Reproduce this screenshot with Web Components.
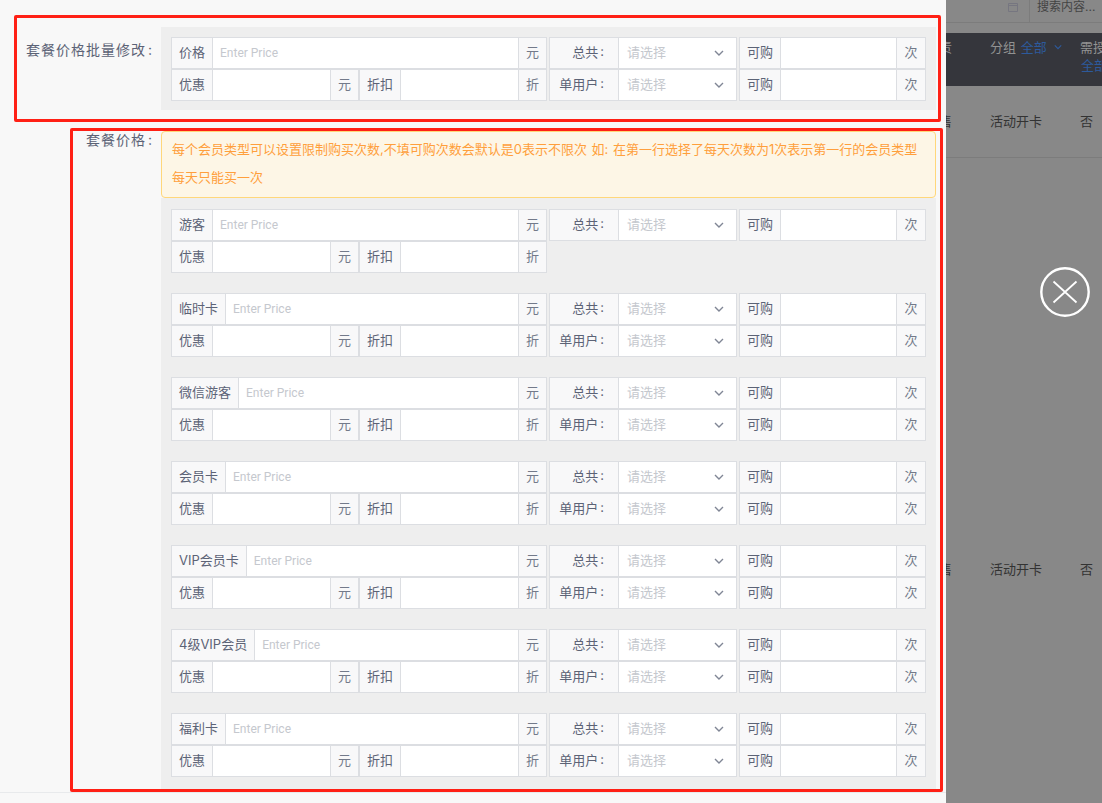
<!DOCTYPE html>
<html lang="zh">
<head>
<meta charset="utf-8">
<title>套餐价格</title>
<style>
  html, body { margin: 0; height: 100%; overflow: hidden; }
  body { font-family: Inter, "Noto Sans CJK SC", sans-serif; }
</style>
</head>
<body>
<app-page></app-page>

<script>
const CHEVRON = `<svg width="10" height="6" viewBox="0 0 10 6" fill="none" stroke="currentColor" stroke-width="1.4"><path d="M1 1l4 4 4-4"/></svg>`;
const COLON = `<span style="margin-left:2px">:</span>`;

// one bordered cell group: [label][input][unit]
class PriceField extends HTMLElement {
  connectedCallback() {
    const root = this.attachShadow({ mode: "open" });
    const placeholder = this.getAttribute("placeholder") || "";
    const unit = this.getAttribute("unit") || "";
    root.innerHTML = `
      <style>
        :host { display: flex; height: 32px; min-width: 0; color: #5c6376; font-size: 13px; }
        .addon, .input { box-sizing: border-box; display: flex; align-items: center; border: 1px solid #dcdee2; white-space: nowrap; }
        .addon { background: #f8f8f9; padding: 0 7px 4px; }
        .addon.label { border-right: 0; }
        .addon.unit { border-left: 0; width: var(--unit-width, 28px); justify-content: center; padding: 0 0 4px; color: #737a8a; }
        .input { flex: 1; min-width: 0; background: #fff; padding: 0 7px; color: #c5c8ce; font: 12px Roboto, Arial, sans-serif; }
      </style>
      <div class="addon label"><slot></slot></div>
      <div class="input">${placeholder}</div>
      <div class="addon unit">${unit}</div>
    `;
  }
}
customElements.define("price-field", PriceField);

// label + fake select with chevron
class SelectField extends HTMLElement {
  connectedCallback() {
    const root = this.attachShadow({ mode: "open" });
    root.innerHTML = `
      <style>
        :host { display: flex; height: 32px; color: #5c6376; font-size: 13px; }
        .label, .select { box-sizing: border-box; display: flex; align-items: center; border: 1px solid #dcdee2; white-space: nowrap; }
        .label { width: 69px; flex: none; justify-content: flex-end; padding: 0 14px 4px 0; background: #f8f8f9; border-right: 0; }
        .select { flex: 1; justify-content: space-between; background: #fff; padding: 0 12px 0 8px; color: #c5c8ce; }
        .select span { padding-bottom: 4px; }
        svg { color: #808695; }
      </style>
      <div class="label"><slot></slot></div>
      <div class="select"><span>请选择</span>${CHEVRON}</div>
    `;
  }
}
customElements.define("select-field", SelectField);

// two rows of fields for one member type
class PriceBlock extends HTMLElement {
  connectedCallback() {
    const root = this.attachShadow({ mode: "open" });
    const name = this.getAttribute("name");
    const short = this.hasAttribute("short");
    root.innerHTML = `
      <style>
        :host { display: grid; grid-template-columns: 188px 188px 190px 189px; height: 64px; }
        .wide { grid-column: 1 / span 2; }
        .third, .fourth { margin-left: 2px; }
        .fourth { --unit-width: 29px; }
      </style>
      <price-field class="wide" placeholder="Enter Price" unit="元">${name}</price-field>
      <select-field class="third">总共${COLON}</select-field>
      <price-field class="fourth" unit="次">可购</price-field>
      <price-field unit="元">优惠</price-field>
      <price-field unit="折">折扣</price-field>
      ${short ? "" : `
      <select-field class="third">单用户${COLON}</select-field>
      <price-field class="fourth" unit="次">可购</price-field>`}
    `;
  }
}
customElements.define("price-block", PriceBlock);

class FormItem extends HTMLElement {
  connectedCallback() {
    const root = this.attachShadow({ mode: "open" });
    root.innerHTML = `
      <style>
        :host { display: grid; grid-template-columns: 161px 775px; }
        .label { box-sizing: border-box; padding: var(--label-top, 0) 8px 0 0; text-align: right; color: #5c6376; font-size: 14px; letter-spacing: 1px; line-height: 18px; white-space: nowrap; }
      </style>
      <div class="label">${this.getAttribute("label")}${COLON}</div>
      <div><slot></slot></div>
    `;
  }
}
customElements.define("form-item", FormItem);

class GrayPanel extends HTMLElement {
  connectedCallback() {
    this.attachShadow({ mode: "open" }).innerHTML = `
      <style>
        :host { display: flex; flex-direction: column; gap: 20px; box-sizing: border-box; background: #eee; padding: 10px 10px 9px; }
      </style>
      <slot></slot>
    `;
  }
}
customElements.define("gray-panel", GrayPanel);

class NoticeBar extends HTMLElement {
  connectedCallback() {
    this.attachShadow({ mode: "open" }).innerHTML = `
      <style>
        :host { display: block; box-sizing: border-box; height: 67px; padding: 3px 16px 0 10px; border: 1px solid #ffd77a; border-radius: 4px; background: #fdf6e6; color: #ff9f3c; font-size: 13px; line-height: 28px; word-spacing: 1px; }
      </style>
      <slot></slot>
    `;
  }
}
customElements.define("notice-bar", NoticeBar);

class RedMark extends HTMLElement {
  connectedCallback() {
    this.attachShadow({ mode: "open" }).innerHTML = `
      <style>
        :host { position: absolute; box-sizing: border-box; border: 3px solid #ff2015; border-radius: 2px; pointer-events: none; }
      </style>
    `;
  }
}
customElements.define("red-mark", RedMark);

class CloseButton extends HTMLElement {
  connectedCallback() {
    this.attachShadow({ mode: "open" }).innerHTML = `
      <style>
        :host { position: absolute; left: 1040px; top: 267px; width: 50px; height: 50px; }
        svg { display: block; }
      </style>
      <svg width="50" height="50" viewBox="0 0 50 50" fill="none" stroke="#fff">
        <circle cx="25" cy="25" r="23.7" stroke-width="2.4"/>
        <path d="M13.5 14.5l23 21M36.5 14.5l-23 21" stroke-width="1.8"/>
      </svg>
    `;
  }
}
customElements.define("close-button", CloseButton);

// dimmed table behind the dialog
class BackdropTable extends HTMLElement {
  connectedCallback() {
    this.attachShadow({ mode: "open" }).innerHTML = `
      <style>
        :host { display: block; height: 803px; overflow: hidden; background: #888; color: #333; font-size: 13px; white-space: nowrap; }
        .search { box-sizing: border-box; height: 23px; border-bottom: 1px solid #7c7c7c; display: flex; padding-left: 62px; }
        .search svg { margin: 3px 11px 0 0; }
        .search div { flex: 1; border-left: 1px solid #7c7c7c; padding-left: 7px; line-height: 14px; color: #444; font-size: 12px; }
        .row { display: grid; grid-template-columns: 44px 90px 1fr; }
        .row > div { min-width: 0; }
        .first { margin-left: -7px; }
        .head { margin-top: 10px; height: 53px; background: #35363c; color: #929292; padding-top: 5px; box-sizing: border-box; line-height: 18px; }
        .blue { color: #2d5a9c; margin-left: 1px; }
        .head svg { margin-left: 7px; width: 8px; color: #2d5a9c; vertical-align: 2px; }
        .cell { align-items: center; padding-bottom: 2px; box-sizing: border-box; }
        .one { height: 72px; border-bottom: 1px solid #7c7c7c; }
        .two { height: 822px; }
      </style>
      <div class="search">
        <svg width="10" height="9" viewBox="0 0 10 9" fill="none" stroke="#767680"><path d="M.5.5h9v8h-9zM.5 2.5h9"/></svg>
        <div>搜索内容...</div>
      </div>
      <div class="row head">
        <div class="first">责</div>
        <div>分组 <span class="blue">全部</span>${CHEVRON}</div>
        <div>需授<br><span class="blue">全部</span></div>
      </div>
      <div class="row cell one"><div class="first">售</div><div>活动开卡</div><div>否</div></div>
      <div class="row cell two"><div class="first">售</div><div>活动开卡</div><div>否</div></div>
    `;
  }
}
customElements.define("backdrop-table", BackdropTable);

class AppPage extends HTMLElement {
  connectedCallback() {
    const root = this.attachShadow({ mode: "open" });
    const names = ["游客", "临时卡", "微信游客", "会员卡", "VIP会员卡", "4级VIP会员", "福利卡"];
    root.innerHTML = `
      <style>
        :host { display: grid; grid-template-columns: 946px 156px; position: relative; width: 1102px; height: 803px; overflow: hidden; }
        .dialog { display: flex; flex-direction: column; background: #f8f8f8; padding-top: 27px; box-sizing: border-box; height: 803px; }
        .batch { --label-top: 14px; height: 84px; margin-bottom: 20px; }
        .main { flex: 1; }
        .footer { height: 10px; border-top: 1px solid #e8eaec; }
        .list { padding-top: 11px; height: 594px; }
      </style>
      <div class="dialog">
        <form-item class="batch" label="套餐价格批量修改">
          <gray-panel><price-block name="价格"></price-block></gray-panel>
        </form-item>
        <form-item class="main" label="套餐价格">
          <notice-bar>每个会员类型可以设置限制购买次数,不填可购次数会默认是0表示不限次 如: 在第一行选择了每天次数为1次表示第一行的会员类型每天只能买一次</notice-bar>
          <gray-panel class="list">
            ${names.map((n, i) => `<price-block name="${n}" ${i === 0 ? "short" : ""}></price-block>`).join("")}
          </gray-panel>
        </form-item>
        <div class="footer"></div>
      </div>
      <backdrop-table></backdrop-table>
      <red-mark style="left:14px;top:15px;width:927px;height:107px"></red-mark>
      <red-mark style="left:70px;top:128px;width:873px;height:664px"></red-mark>
      <close-button></close-button>
    `;
  }
}
customElements.define("app-page", AppPage);
</script>
</body>
</html>
